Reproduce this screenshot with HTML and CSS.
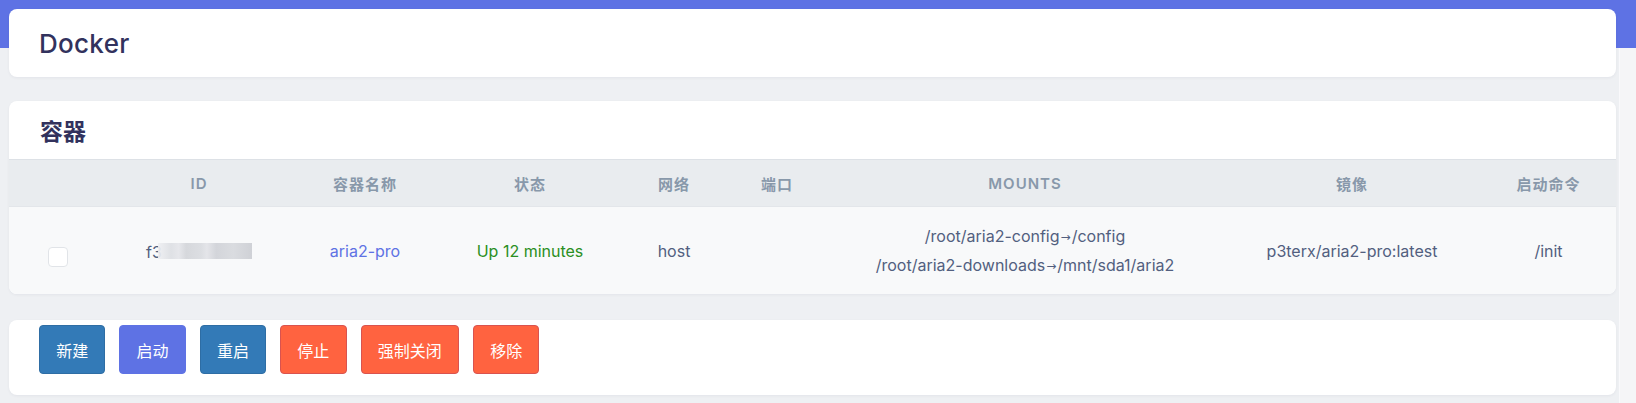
FILE: index.html
```html
<!DOCTYPE html>
<html lang="zh-CN">
<head>
<meta charset="utf-8">
<title>Docker</title>
<link rel="stylesheet" href="styles.css">
</head>
<body>
<div class="app">
  <main class="main">
    <section class="card card-title">
      <h1 class="page-title">Docker</h1>
    </section>

    <section class="card card-table">
      <h2 class="section-title">容器</h2>
      <table class="tbl">
        <colgroup>
          <col class="c-sel"><col class="c-id"><col class="c-name"><col class="c-status">
          <col class="c-net"><col class="c-port"><col class="c-mounts"><col class="c-image"><col class="c-cmd">
        </colgroup>
        <thead>
          <tr>
            <th></th><th>ID</th><th>容器名称</th><th>状态</th><th>网络</th><th>端口</th><th>MOUNTS</th><th>镜像</th><th>启动命令</th>
          </tr>
        </thead>
        <tbody>
          <tr>
            <td><span class="check"></span></td>
            <td><span class="id-text">f3</span><span class="blur"></span></td>
            <td><span class="link">aria2-pro</span></td>
            <td><span class="up">Up 12 minutes</span></td>
            <td>host</td>
            <td></td>
            <td><div class="mounts"><div>/root/aria2-config<span class="arrow">→</span>/config</div><div>/root/aria2-downloads<span class="arrow">→</span>/mnt/sda1/aria2</div></div></td>
            <td>p3terx/aria2-pro:latest</td>
            <td>/init</td>
          </tr>
        </tbody>
      </table>
    </section>

    <section class="card card-actions">
      <button class="btn btn-primary">新建</button>
      <button class="btn btn-indigo">启动</button>
      <button class="btn btn-primary">重启</button>
      <button class="btn btn-danger">停止</button>
      <button class="btn btn-danger">强制关闭</button>
      <button class="btn btn-danger">移除</button>
    </section>
  </main>
  <div class="track"></div>
</div>
</body>
</html>
```

FILE: styles.css
```css
html, body {
  margin: 0;
  padding: 0;
}
body {
  width: 1636px;
  height: 403px;
  overflow: hidden;
  background: linear-gradient(#5e72e4 0, #5e72e4 48px, #eef0f3 48px);
  font-family: Inter, "Noto Sans CJK SC", sans-serif;
  color: #525f7f;
}
.app {
  display: flex;
  height: 403px;
}
.main {
  flex: 1;
  padding: 9px 3px 0 9px;
  display: flex;
  flex-direction: column;
}
.track {
  width: 17px;
  margin-top: 48px;
  background: #f5f5f7;
  border-left: 1px solid #f9f9fb;
  box-sizing: border-box;
}
.card {
  background: #fff;
  border-radius: 8px;
  box-shadow: 0 1px 3px rgba(50, 50, 93, 0.06);
}
.card-title {
  height: 68px;
  display: flex;
  align-items: center;
  padding-left: 30px;
}
.page-title {
  margin: 0;
  font-size: 26px;
  font-weight: 500;
  color: #32325d;
  letter-spacing: 0.3px;
}
.card-table {
  margin-top: 24px;
  overflow: hidden;
}
.section-title {
  margin: 0;
  height: 58px;
  display: flex;
  align-items: center;
  padding-left: 31px;
  font-size: 23px;
  font-weight: 700;
  color: #32325d;
}
.tbl {
  width: 100%;
  border-collapse: collapse;
  table-layout: fixed;
}
.c-sel { width: 98px; }
.c-id { width: 184px; }
.c-name { width: 148px; }
.c-status { width: 182px; }
.c-net { width: 106px; }
.c-port { width: 100px; }
.c-mounts { width: 396px; }
.c-image { width: 258px; }
.c-cmd { width: 135px; }
.tbl th {
  height: 46px;
  padding: 0;
  background: #e9ecef;
  border-top: 1px solid #dde1e6;
  border-bottom: 1px solid #e3e6ea;
  color: #8898aa;
  font-size: 15px;
  font-weight: 600;
  letter-spacing: 1px;
  text-align: center;
  vertical-align: middle;
}
.tbl td {
  height: 87px;
  padding: 0;
  background: #f8f9fa;
  font-size: 16px;
  text-align: center;
  vertical-align: middle;
  color: #525f7f;
}
.check {
  display: inline-block;
  width: 20px;
  height: 20px;
  margin-top: 12px;
  box-sizing: border-box;
  border: 1px solid #e1e4e8;
  border-radius: 4px;
  background: #fff;
  vertical-align: middle;
}
.id-text {
  vertical-align: middle;
}
.blur {
  display: inline-block;
  width: 94px;
  height: 16px;
  margin-left: -4px;
  vertical-align: middle;
  background:
    linear-gradient(90deg,
      rgba(238, 239, 242, 0.9) 0,
      #dfe1e5 14%,
      #e6e7eb 22%,
      #d6d8dc 30%,
      #dcdee2 46%,
      #e4e5e9 52%,
      #d3d5da 62%,
      #dadce0 80%,
      #cfd1d6 100%);
}
.link {
  color: #5e72e4;
}
.up {
  color: #2a8f22;
}
.mounts {
  line-height: 28px;
}
.arrow {
  font-family: "DejaVu Sans", sans-serif;
  font-size: 12px;
  padding: 0 1px;
  vertical-align: 1px;
}
.card-actions {
  margin-top: 26px;
  height: 75px;
  box-sizing: border-box;
  padding: 5px 0 0 30px;
  display: flex;
  align-items: flex-start;
  gap: 14px;
}
.btn {
  height: 49px;
  padding: 0 16.2px;
  border-radius: 4px;
  border: 1px solid transparent;
  font-family: "Noto Sans CJK SC", sans-serif;
  font-size: 16px;
  color: #fff;
  cursor: pointer;
}
.btn-primary {
  background: #337ab7;
  border-color: #2e6da4;
}
.btn-indigo {
  background: #5e72e4;
  border-color: #5e72e4;
}
.btn-danger {
  background: #ff6340;
  border-color: #d9534f;
}
```
